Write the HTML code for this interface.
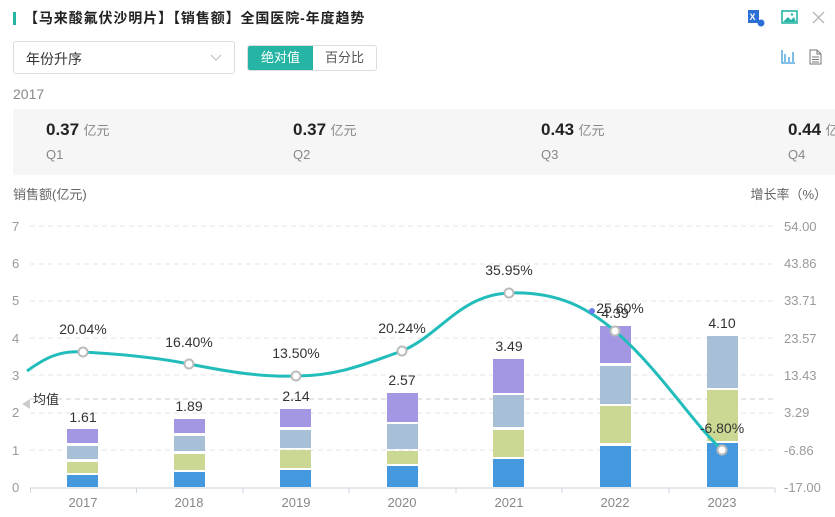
<!DOCTYPE html>
<html><head><meta charset="utf-8"><style>
*{margin:0;padding:0;box-sizing:border-box}
body{width:835px;height:517px;background:#fff;font-family:"Liberation Sans","Noto Sans CJK SC",sans-serif;position:relative;overflow:hidden;color:#333}
.abs{position:absolute;white-space:nowrap}
.title{left:24px;top:8px;font-size:14px;font-weight:bold;color:#222;letter-spacing:0.9px}
.bar{left:13px;top:12px;width:3px;height:13px;background:#26b5a4}
.dd{left:13px;top:41px;width:222px;height:33px;border:1px solid #ddd;border-radius:3px;font-size:14px;padding:7px 0 0 12px;color:#333}
.tog{left:247px;top:45px;width:130px;height:26px;border:1px solid #ddd;border-radius:3px;font-size:13px;overflow:hidden}
.tog div{position:absolute;top:0;height:24px;line-height:24px;text-align:center}
.sum{left:13px;top:109px;width:822px;height:66px;background:#f6f6f6;overflow:hidden}
.v{font-size:17px;font-weight:bold;color:#222}
.u{font-size:13px;color:#888;font-weight:normal}
.q{font-size:13px;color:#888}
</style></head><body>
<div class="abs bar"></div>
<div class="abs title">【马来酸氟伏沙明片】【销售额】全国医院-年度趋势</div>
<svg class="abs" style="left:746px;top:8px" width="85" height="20">
<rect x="2" y="2" width="11" height="13" fill="#2b6fd6"/><text x="3.5" y="12" font-size="9" fill="#fff" font-family="Liberation Sans" font-weight="bold">X</text><circle cx="15" cy="15" r="3.5" fill="#2b6fd6"/>
<rect x="36" y="3" width="15" height="12" fill="none" stroke="#26b5a4" stroke-width="1.6"/><path d="M37 14 L42 9 L45 12 L48 9 L50 14Z" fill="#26b5a4"/><circle cx="46" cy="6.5" r="1.2" fill="#26b5a4"/>
<path d="M67 4 L78 15 M78 4 L67 15" stroke="#bbb" stroke-width="1.5"/>
</svg>
<div class="abs dd">年份升序<svg class="abs" style="left:196px;top:12px" width="12" height="8"><path d="M1 1 L6 6 L11 1" fill="none" stroke="#bbb"/></svg></div>
<div class="abs tog"><div style="left:0;width:65px;background:#26b5a4;color:#fff">绝对值</div><div style="left:65px;width:63px;color:#555">百分比</div></div>
<svg class="abs" style="left:780px;top:48px" width="45" height="18">
<path d="M2 2 V15 H15 M5 6 V14 M9 9 V14 M13 4 V14" fill="none" stroke="#3a9ad9" stroke-width="1.3"/>
<path d="M30 2 H37 L41 6 V16 H30 Z M37 2 V6 H41 M32 9 H39 M32 11.5 H39 M32 14 H39" fill="none" stroke="#777" stroke-width="1"/>
</svg>
<div class="abs" style="left:13px;top:86px;font-size:14px;color:#888">2017</div>
<div class="abs sum">
<div class="abs" style="left:33px;top:11px"><span class="v">0.37</span> <span class="u">亿元</span></div><div class="abs q" style="left:33px;top:38px">Q1</div>
<div class="abs" style="left:280px;top:11px"><span class="v">0.37</span> <span class="u">亿元</span></div><div class="abs q" style="left:280px;top:38px">Q2</div>
<div class="abs" style="left:528px;top:11px"><span class="v">0.43</span> <span class="u">亿元</span></div><div class="abs q" style="left:528px;top:38px">Q3</div>
<div class="abs" style="left:775px;top:11px"><span class="v">0.44</span> <span class="u">亿元</span></div><div class="abs q" style="left:775px;top:38px">Q4</div>
</div>
<svg class="abs" style="left:0;top:0" width="835" height="517" font-family="Liberation Sans,Noto Sans CJK SC,sans-serif">
<text x="13" y="199" font-size="13" fill="#666">销售额(亿元)</text>
<text x="827" y="199" font-size="13" fill="#666" text-anchor="end">增长率（%）</text>
<g stroke="#e6e6e6" stroke-dasharray="5,4">
<line x1="30" y1="226" x2="775" y2="226"/><line x1="30" y1="264" x2="775" y2="264"/><line x1="30" y1="301" x2="775" y2="301"/><line x1="30" y1="338" x2="775" y2="338"/><line x1="30" y1="375" x2="775" y2="375"/><line x1="30" y1="413" x2="775" y2="413"/><line x1="30" y1="450" x2="775" y2="450"/>
</g>
<line x1="30" y1="399" x2="775" y2="399" stroke="#ccc" stroke-dasharray="5,4"/>
<g font-size="13" fill="#999">
<text x="12" y="231">7</text><text x="12" y="268">6</text><text x="12" y="305">5</text><text x="12" y="343">4</text><text x="12" y="380">3</text><text x="12" y="417">2</text><text x="12" y="455">1</text><text x="12" y="492">0</text>
<text x="784" y="231">54.00</text><text x="784" y="268">43.86</text><text x="784" y="305">33.71</text><text x="784" y="343">23.57</text><text x="784" y="380">13.43</text><text x="784" y="417">3.29</text><text x="784" y="455">-6.86</text><text x="784" y="492">-17.00</text>
</g>
<line x1="30" y1="488" x2="775" y2="488" stroke="#ccd6dd"/>
<g stroke="#ccd6dd"><line x1="30.5" y1="488" x2="30.5" y2="493"/><line x1="136.5" y1="488" x2="136.5" y2="493"/><line x1="243" y1="488" x2="243" y2="493"/><line x1="349" y1="488" x2="349" y2="493"/><line x1="456" y1="488" x2="456" y2="493"/><line x1="562" y1="488" x2="562" y2="493"/><line x1="669" y1="488" x2="669" y2="493"/><line x1="775" y1="488" x2="775" y2="493"/></g>
<g font-size="13" fill="#888" text-anchor="middle">
<text x="83" y="507">2017</text><text x="189" y="507">2018</text><text x="296" y="507">2019</text><text x="402" y="507">2020</text><text x="509" y="507">2021</text><text x="615" y="507">2022</text><text x="722" y="507">2023</text>
</g>
<g>
<rect x="67" y="429" width="31" height="14" fill="#a397e4"/><rect x="67" y="446" width="31" height="13" fill="#a8bfd8"/><rect x="67" y="462" width="31" height="11" fill="#cbd893"/><rect x="67" y="475" width="31" height="12" fill="#4398de"/>
<rect x="174" y="419" width="31" height="14" fill="#a397e4"/><rect x="174" y="436" width="31" height="15" fill="#a8bfd8"/><rect x="174" y="454" width="31" height="16" fill="#cbd893"/><rect x="174" y="472" width="31" height="15" fill="#4398de"/>
<rect x="280" y="409" width="31" height="18" fill="#a397e4"/><rect x="280" y="430" width="31" height="18" fill="#a8bfd8"/><rect x="280" y="450" width="31" height="18" fill="#cbd893"/><rect x="280" y="470" width="31" height="17" fill="#4398de"/>
<rect x="387" y="393" width="31" height="29" fill="#a397e4"/><rect x="387" y="424" width="31" height="25" fill="#a8bfd8"/><rect x="387" y="451" width="31" height="13" fill="#cbd893"/><rect x="387" y="466" width="31" height="21" fill="#4398de"/>
<rect x="493" y="359" width="31" height="34" fill="#a397e4"/><rect x="493" y="395" width="31" height="32" fill="#a8bfd8"/><rect x="493" y="430" width="31" height="27" fill="#cbd893"/><rect x="493" y="459" width="31" height="28" fill="#4398de"/>
<rect x="600" y="326" width="31" height="37" fill="#a397e4"/><rect x="600" y="366" width="31" height="38" fill="#a8bfd8"/><rect x="600" y="406" width="31" height="37" fill="#cbd893"/><rect x="600" y="446" width="31" height="41" fill="#4398de"/>
<rect x="707" y="336" width="31" height="52" fill="#a8bfd8"/><rect x="707" y="390" width="31" height="51" fill="#cbd893"/><rect x="707" y="443" width="31" height="44" fill="#4398de"/>
</g>
<path d="M22 404 L30 399 L30 409Z" fill="#ccc"/>
<text x="33" y="404" font-size="13" fill="#333">均值</text>
<g font-size="14" fill="#333" text-anchor="middle">
<text x="83" y="422">1.61</text><text x="189" y="411">1.89</text><text x="296" y="401">2.14</text><text x="402" y="385">2.57</text><text x="509" y="351">3.49</text><text x="615" y="318">4.39</text><text x="722" y="328">4.10</text>
</g>
<path d="M27 371 C45 358 60 350 83 352 C120 354 160 358 189 364 C230 372 260 377 296 376 C340 376 370 362 402 351 C440 335 460 295 509 293 C560 291 590 310 615 331 C660 370 690 420 722 450" fill="none" stroke="#22bdbb" stroke-width="3"/>
<circle cx="592" cy="311" r="3" fill="#6f7be8"/>
<g fill="#fff" stroke="#bbb" stroke-width="2">
<circle cx="83" cy="352" r="4.5"/><circle cx="189" cy="364" r="4.5"/><circle cx="296" cy="376" r="4.5"/><circle cx="402" cy="351" r="4.5"/><circle cx="509" cy="293" r="4.5"/><circle cx="615" cy="331" r="4.5"/><circle cx="722" cy="450" r="4.5"/>
</g>
<g font-size="14" fill="#333" text-anchor="middle">
<text x="83" y="334">20.04%</text><text x="189" y="347">16.40%</text><text x="296" y="358">13.50%</text><text x="402" y="333">20.24%</text><text x="509" y="275">35.95%</text><text x="620" y="313">25.60%</text><text x="722" y="433">-6.80%</text>
</g>
</svg>
</body></html>
